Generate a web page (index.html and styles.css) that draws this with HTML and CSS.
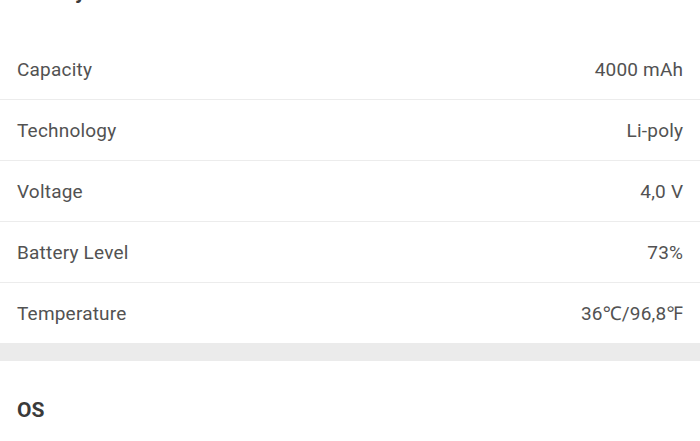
FILE: index.html
```html
<!DOCTYPE html>
<html lang="en">
<head>
    <meta charset="UTF-8">
    <meta name="viewport" content="width=device-width, initial-scale=1.0">
    <title>Device Info</title>
    <link rel="stylesheet" href="styles.css">
</head>
<body>
    <div class="page">
        <section class="section">
            <h2 class="section-title">Battery</h2>
            <div class="row"><span class="label">Capacity</span><span class="value">4000 mAh</span></div>
            <div class="row"><span class="label">Technology</span><span class="value">Li-poly</span></div>
            <div class="row"><span class="label">Voltage</span><span class="value">4,0 V</span></div>
            <div class="row"><span class="label">Battery Level</span><span class="value">73%</span></div>
            <div class="row"><span class="label">Temperature</span><span class="value">36℃/96,8℉</span></div>
        </section>
        <div class="divider"></div>
        <section class="section">
            <h2 class="section-title">OS</h2>
        </section>
    </div>
</body>
</html>
```

FILE: styles.css
```css
body {
    margin: 0;
    background: #fff;
    font-family: Roboto, "Noto Sans", sans-serif;
    overflow: hidden;
}
.page {
    margin-top: -57px;
}
.section-title {
    margin: 0;
    padding: 37px 17px 33px;
    font-size: 21px;
    line-height: 24px;
    font-weight: bold;
    color: #3a3a3a;
}
.section:first-child .section-title {
    padding-bottom: 35px;
}
.row {
    display: flex;
    justify-content: space-between;
    align-items: center;
    height: 60px;
    padding: 0 17px;
    border-bottom: 1px solid #ececec;
    font-size: 19px;
    letter-spacing: 0.2px;
    color: #525252;
}
.row:last-child {
    border-bottom: none;
}
.value {
    margin-right: -0.2px;
}
.divider {
    height: 18px;
    background: #ebebeb;
}
```
